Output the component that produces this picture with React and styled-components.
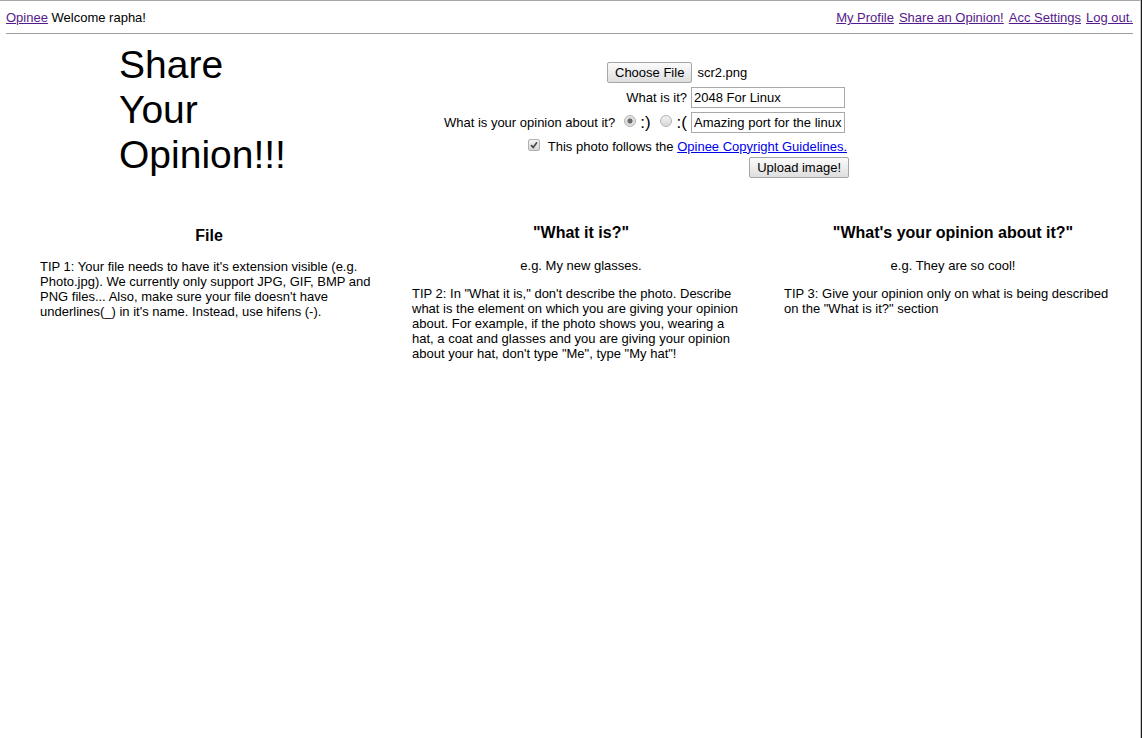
import React from "react";
import styled, { createGlobalStyle } from "styled-components";

const Global = createGlobalStyle`
  html, body { margin: 0; padding: 0; background: #fff; }
  body { font-family: "Liberation Sans", Arial, sans-serif; font-size: 13px; color: #000; }
`;

const Page = styled.div`
  box-sizing: border-box;
  width: 1141px;
  min-height: 738px;
  border-top: 1px solid #a8a8a8;
  border-right: 1px solid #c8c8c8;
  box-shadow: 1px 0 0 #1a1a1a;
  padding: 0 6px;
`;

const Header = styled.div`
  display: flex;
  justify-content: space-between;
  align-items: center;
  padding-top: 9px;
  line-height: 15px;
  height: 15px;
  padding-right: 1px;
`;

const NavLink = styled.a`
  color: ${(p) => (p.$fresh ? "#0000ee" : "#551a8b")};
  text-decoration: underline;
  cursor: pointer;
`;

const NavGroup = styled.div`
  display: flex;
  gap: 5px;
`;

const Rule = styled.hr`
  margin: 8px 0 0 0;
  border: 0;
  height: 1px;
  background: #a0a0a0;
  width: 1127px;
`;

const Top = styled.div`
  display: flex;
  padding-left: 113px;
`;

const Title = styled.h1`
  margin: 8px 0 0 0;
  width: 301px;
  font-weight: normal;
  font-size: 39px;
  line-height: 45px;
`;

const Form = styled.form`
  width: 429px;
  padding-top: 26px;
  display: flex;
  flex-direction: column;
`;

const Row = styled.div`
  display: flex;
  justify-content: flex-end;
  align-items: center;
  height: ${(p) => p.$h}px;
  margin-right: ${(p) => p.$mr || 0}px;
  white-space: pre;
`;

const Button = styled.button`
  font-family: "Liberation Sans", Arial, sans-serif;
  font-size: 13px;
  color: #000;
  height: 21px;
  padding: 0 7px;
  border: 1px solid #a6a6a6;
  border-radius: 2px;
  background: linear-gradient(#fbfbfb, #dedede);
`;

const FileBox = styled.div`
  width: 240px;
  display: flex;
  align-items: center;
  gap: 5px;
  margin-right: 2px;
`;

const TextInput = styled.input`
  box-sizing: border-box;
  width: 154px;
  height: 21px;
  margin: 0 4px 0 4px;
  padding: 1px 2px;
  border: 1px solid #a9a9a9;
  font-family: "Liberation Sans", Arial, sans-serif;
  font-size: 13px;
  color: #000;
  background: #fff;
`;

const Radio = styled.span`
  display: inline-block;
  box-sizing: border-box;
  width: 12px;
  height: 12px;
  border-radius: 50%;
  border: 1px solid #b5b5b5;
  background: ${(p) =>
    p.$on
      ? "radial-gradient(circle, #6a6a6a 0 2.2px, #d9d9d9 2.8px, #ececec 100%)"
      : "linear-gradient(#f2f2f2, #d8d8d8)"};
  margin: ${(p) => p.$m};
  position: relative;
  top: -2px;
`;

const Face = styled.span`
  font-size: 17px;
  font-weight: normal;
`;

const Check = styled.span`
  display: inline-block;
  box-sizing: border-box;
  width: 12px;
  height: 12px;
  border: 1px solid #b0b0b0;
  border-radius: 2px;
  background: linear-gradient(#f4f4f4, #d6d6d6);
  margin-right: 8px;
  position: relative;
  top: -1px;
  svg { display: block; }
`;

const Tips = styled.div`
  display: grid;
  grid-template-columns: repeat(3, 372px);
  margin: 22px 0 0 17px;
`;

const Col = styled.div`
  padding: 0 17px;
  line-height: 15px;
`;

const ColTitle = styled.h3`
  margin: ${(p) => p.$top}px 0 0 0;
  font-size: 16px;
  line-height: 18px;
  text-align: center;
`;

const Example = styled.p`
  margin: 16px 0 0 0;
  text-align: center;
`;

const Tip = styled.p`
  margin: ${(p) => p.$top}px 4px 0 0;
`;

export default function App() {
  return (
    <>
      <Global />
      <Page>
        <Header>
          <div>
            <NavLink>Opinee</NavLink> Welcome rapha!
          </div>
          <NavGroup>
            <NavLink>My Profile</NavLink>
            <NavLink>Share an Opinion!</NavLink>
            <NavLink>Acc Settings</NavLink>
            <NavLink>Log out.</NavLink>
          </NavGroup>
        </Header>
        <Rule />
        <Top>
          <Title>
            Share
            <br />
            Your
            <br />
            Opinion!!!
          </Title>
          <Form onSubmit={(e) => e.preventDefault()}>
            <Row $h={25}>
              <FileBox>
                <Button type="button">Choose File</Button>
                <span>scr2.png</span>
              </FileBox>
            </Row>
            <Row $h={25}>
              What is it?
              <TextInput defaultValue="2048 For Linux" />
            </Row>
            <Row $h={25}>
              What is your opinion about it?
              <Radio $on $m="0 4px 0 9px" />
              <Face>:)</Face>
              <Radio $m="0 5px 0 9px" />
              <Face>:(</Face>
              <TextInput defaultValue="Amazing port for the linux" />
            </Row>
            <Row $h={22} $mr={2}>
              <Check>
                <svg width="10" height="10" viewBox="0 0 10 10">
                  <path d="M2 5.2 L4.2 7.4 L8 2.2" stroke="#4a4a4a" strokeWidth="1.7" fill="none" />
                </svg>
              </Check>
              This photo follows the <NavLink $fresh>Opinee Copyright Guidelines.</NavLink>
            </Row>
            <Row $h={21}>
              <Button type="submit">Upload image!</Button>
            </Row>
          </Form>
        </Top>
        <Tips>
          <Col>
            <ColTitle $top={27}>File</ColTitle>
            <Tip $top={14}>
              TIP 1: Your file needs to have it's extension visible (e.g. Photo.jpg). We currently
              only support JPG, GIF, BMP and PNG files... Also, make sure your file doesn't have
              underlines(_) in it's name. Instead, use hifens (-).
            </Tip>
          </Col>
          <Col>
            <ColTitle $top={24}>"What it is?"</ColTitle>
            <Example>e.g. My new glasses.</Example>
            <Tip $top={13}>
              TIP 2: In "What it is," don't describe the photo. Describe what is the element on which
              you are giving your opinion about. For example, if the photo shows you, wearing a hat, a
              coat and glasses and you are giving your opinion about your hat, don't type "Me", type
              "My hat"!
            </Tip>
          </Col>
          <Col>
            <ColTitle $top={24}>"What's your opinion about it?"</ColTitle>
            <Example>e.g. They are so cool!</Example>
            <Tip $top={13}>
              TIP 3: Give your opinion only on what is being described on the "What is it?" section
            </Tip>
          </Col>
        </Tips>
      </Page>
    </>
  );
}
